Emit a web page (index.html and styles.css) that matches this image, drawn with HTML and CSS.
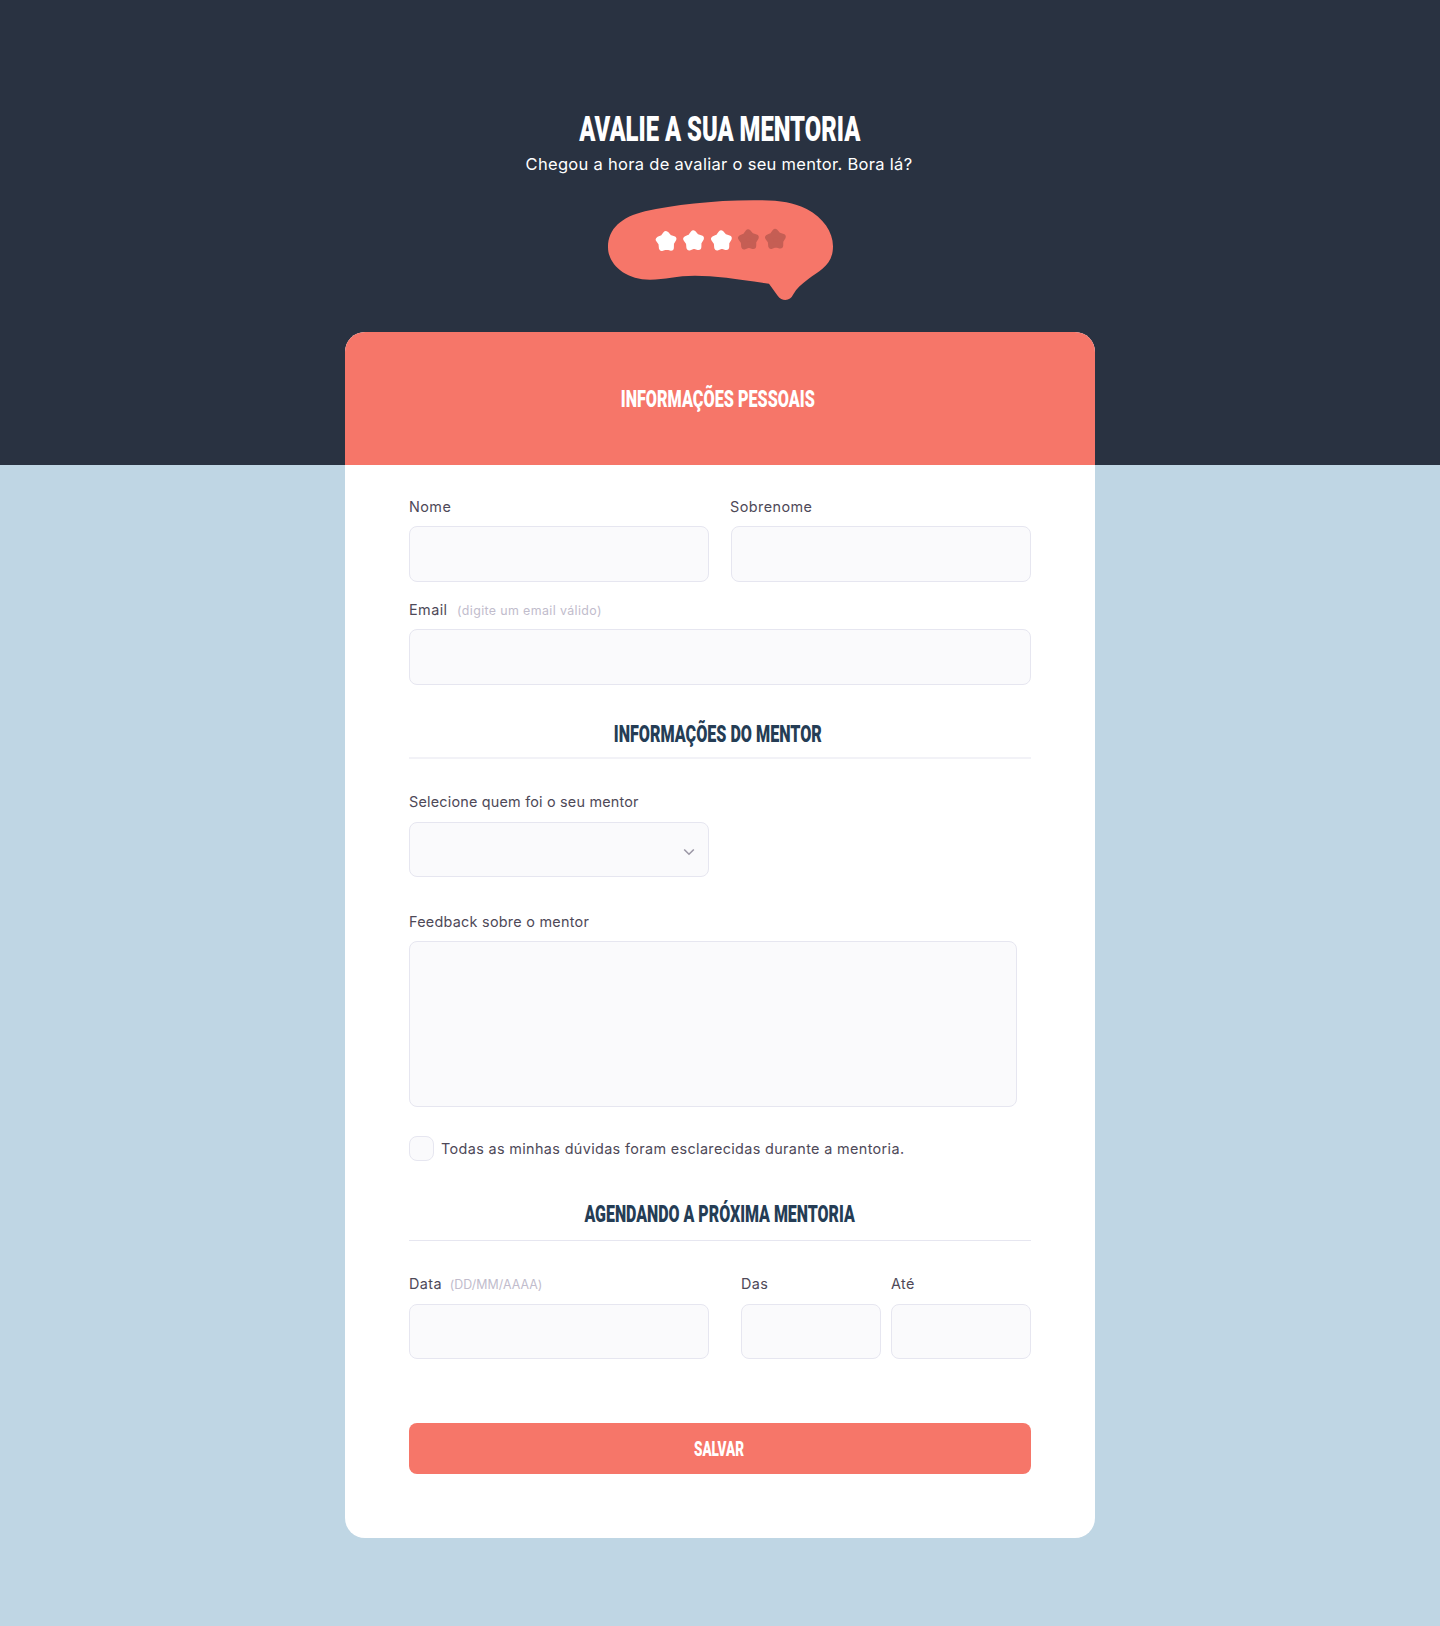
FILE: index.html
```html
<!DOCTYPE html>
<html lang="pt-br">
<head>
  <meta charset="utf-8">
  <title>Avalie a sua mentoria</title>
  <link rel="stylesheet" href="styles.css">
</head>
<body>
  <header class="page-header">
    <h1 class="title"><span class="condensed">AVALIE A SUA MENTORIA</span></h1>
    <p class="subtitle">Chegou a hora de avaliar o seu mentor. Bora lá?</p>
    <svg class="bubble" viewBox="54 29 675 301" width="225" height="100" preserveAspectRatio="none" aria-hidden="true">
      <defs>
        <path id="star" stroke-width="18" stroke-linejoin="round" d="M0-23 8.8-12.1 21.900-7.1 14.3 4.6 13.500 18.600 0 14-13.500 18.600-14.3 4.6-21.900-7.1-8.8-12.1Z"/>
      </defs>
      <path fill="#f67669" d="M54 171C54 115 95 80 165 63C250 45 365 30 490 30C560 29 605 34 650 56C700 83 729 125 729 168C729 225 690 240 655 267C635 282 620 295 610 313Q602 330 586 330Q573 330 563 317L537 281C450 268 375 257 315 257C260 257 225 269 180 269C105 269 54 222 54 171Z"/>
      <g fill="#fff" stroke="#fff">
        <use href="#star" transform="translate(228.5 154.500) rotate(-2)"/>
        <use href="#star" transform="translate(311 152.500) rotate(-2)"/>
        <use href="#star" transform="translate(394.500 152.500) rotate(-2)"/>
      </g>
      <g fill="#c55e54" stroke="#c55e54">
        <use href="#star" transform="translate(475.500 149.500) rotate(-2)"/>
        <use href="#star" transform="translate(556.500 148) rotate(-2)"/>
      </g>
    </svg>
  </header>

  <form class="card">
    <div class="card-header">
      <h2 class="heading"><span class="condensed">INFORMAÇÕES PESSOAIS</span></h2>
    </div>
    <div class="card-body">
      <div class="row row-name">
        <div class="field tight">
          <label for="nome">Nome</label>
          <input id="nome" class="control tall" type="text">
        </div>
        <div class="field tight">
          <label for="sobrenome" class="nudge">Sobrenome</label>
          <input id="sobrenome" class="control tall" type="text">
        </div>
      </div>
      <div class="field tight email">
        <label for="email">Email <span class="hint">(digite um email válido)</span></label>
        <input id="email" class="control tall" type="email">
      </div>

      <h2 class="heading section mentor"><span class="condensed">INFORMAÇÕES DO MENTOR</span></h2>
      <div class="field half">
        <label for="mentor">Selecione quem foi o seu mentor</label>
        <div class="control select" id="mentor">
          <svg width="12" height="8" viewBox="0 0 12 8" fill="none" stroke="#9c98a6" stroke-width="1.6" aria-hidden="true"><path d="M1.2 1.500 6 6.200 10.800 1.500"/></svg>
        </div>
      </div>
      <div class="field feedback tight">
        <label for="feedback">Feedback sobre o mentor</label>
        <textarea id="feedback" class="control area"></textarea>
      </div>
      <label class="check"><input type="checkbox" class="box"><span class="check-text">Todas as minhas dúvidas foram esclarecidas durante a mentoria.</span></label>

      <h2 class="heading section next"><span class="condensed">AGENDANDO A PRÓXIMA MENTORIA</span></h2>
      <div class="row row-date">
        <div class="field">
          <label for="data">Data <span class="hint date">(DD/MM/AAAA)</span></label>
          <input id="data" class="control" type="text">
        </div>
        <div class="row times">
          <div class="field">
            <label for="das">Das</label>
            <input id="das" class="control" type="text">
          </div>
          <div class="field">
            <label for="ate">Até</label>
            <input id="ate" class="control" type="text">
          </div>
        </div>
      </div>
      <button class="save" type="button"><span class="condensed">SALVAR</span></button>
    </div>
  </form>
</body>
</html>
```
FILE: styles.css
```css
* {
  box-sizing: border-box;
  margin: 0;
}

body {
  min-height: 1626px;
  background: linear-gradient(#293241 465px, #bfd6e4 465px) no-repeat #bfd6e4;
  color: #4e4958;
  font: 14.4px/24px Inter, "Noto Sans", sans-serif;
  letter-spacing: 0.45px;
}

.page-header {
  display: flex;
  flex-direction: column;
  align-items: center;
  padding-top: 109px;
  color: #fff;
}

.title,
.heading,
.save {
  font-family: Roboto, sans-serif;
  font-weight: 900;
  letter-spacing: 0;
  text-align: center;
  white-space: nowrap;
}

.condensed {
  display: inline-block;
  transform: scaleX(0.683);
}

.title {
  font-size: 35.5px;
  line-height: 40px;
}

.title .condensed {
  transform: scaleX(0.67);
}

.subtitle {
  margin-top: 3px;
  padding-right: 2px;
  font-size: 16.5px;
  letter-spacing: 0.3px;
}

.bubble {
  display: block;
  margin: 24px 0 32px 1px;
}

.card {
  width: 750px;
  margin: 0 auto;
  overflow: hidden;
  border-radius: 20px;
  background: #fff;
}

.card-header {
  height: 133px;
  padding: 53px 5px 0 0;
  background: #f67669;
  color: #fff;
}

.heading {
  font-size: 24px;
  line-height: 28px;
}

.card-header .condensed {
  transform: scaleX(0.675);
}

.card-body {
  padding: 30px 64px 64px;
}

.row {
  display: flex;
}

.row-name {
  gap: 22px;
}

.row-name .field {
  flex: 1;
}

.field {
  display: flex;
  flex-direction: column;
  gap: 8px;
}

.field label {
  height: 24px;
}

.tight {
  gap: 7px;
}

.nudge {
  margin-left: -1px;
}

.email {
  margin-top: 16px;
}

.hint {
  margin-left: 5px;
  color: #c1bccc;
  font-size: 12.4px;
  line-height: 1;
  letter-spacing: 0.38px;
}

.hint.date {
  margin-left: 3px;
  letter-spacing: 0.05px;
}

.control {
  width: 100%;
  height: 55px;
  border: 1px solid #e6e6f0;
  border-radius: 8px;
  background: #fafafc;
}

.tall {
  height: 56px;
}

.section {
  color: #253d55;
}

.section.mentor {
  margin: 35px 0 31px;
  padding: 0 5px 9px 0;
  border-bottom: 2px solid #f2f2f7;
}

.mentor .condensed {
  transform: scaleX(0.672);
}

.section.next {
  margin: 39px 0 31px;
  padding-bottom: 12px;
  border-bottom: 1px solid #e6e6f0;
}

.next .condensed {
  transform: scaleX(0.664);
}

.half {
  width: 300px;
  letter-spacing: 0.2px;
}

.select {
  display: flex;
  align-items: center;
  justify-content: flex-end;
  padding: 4px 13px 0 0;
}

.feedback {
  width: 608px;
  margin-top: 33px;
  letter-spacing: 0.26px;
}

.area {
  display: block;
  height: 166px;
  resize: none;
}

.check {
  display: flex;
  align-items: center;
  gap: 8px;
  margin-top: 29px;
}

.box {
  width: 25px;
  height: 25px;
  border: 1px solid #e6e6f0;
  border-radius: 8px;
  background: #fafafc;
  appearance: none;
}

.check-text {
  margin-left: -1px;
  letter-spacing: 0.36px;
}

.row-date {
  justify-content: space-between;
}

.row-date > .field {
  width: 300px;
}

.times {
  gap: 10px;
}

.times .field {
  width: 140px;
}

.save {
  width: 100%;
  height: 51px;
  margin-top: 64px;
  padding: 0 2px 0 0;
  border: 0;
  border-radius: 8px;
  background: #f67669;
  color: #fff;
  font-size: 20.5px;
}

.save .condensed {
  transform: scaleX(0.66);
}
```
